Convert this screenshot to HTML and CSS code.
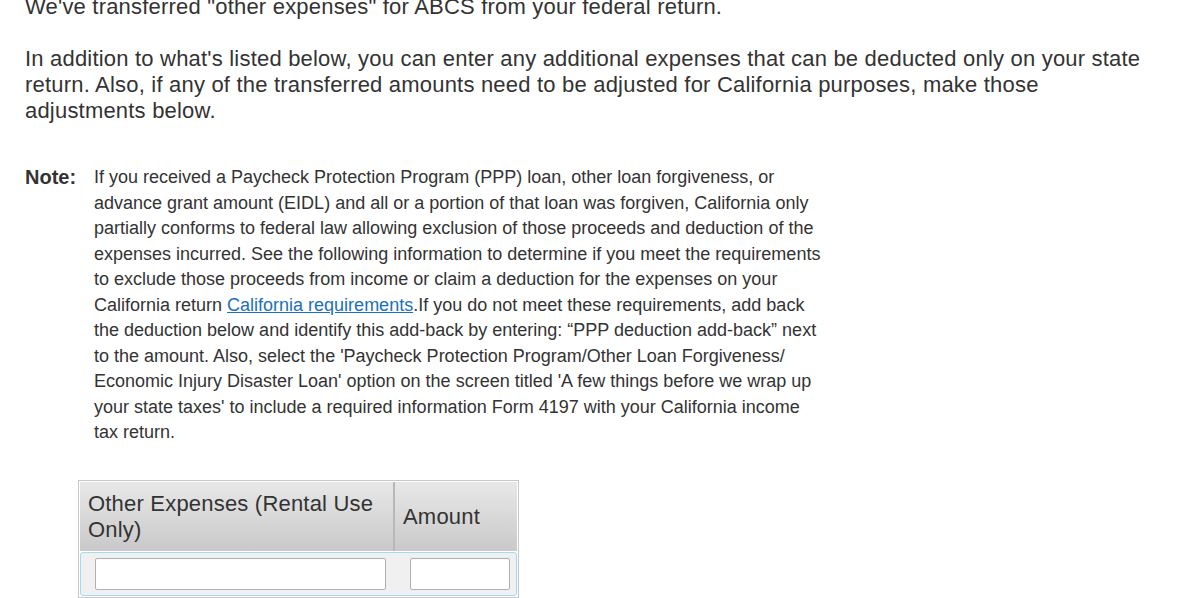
FILE: index.html
```html
<!DOCTYPE html>
<html>
<head>
<meta charset="utf-8">
<link rel="stylesheet" href="styles.css">
</head>
<body>
<div class="page">
  <p class="lead first">We've transferred "other expenses" for ABCS from your federal return.</p>
  <p class="lead">In addition to what's listed below, you can enter any additional expenses that can be deducted only on your state return. Also, if any of the transferred amounts need to be adjusted for California purposes, make those adjustments below.</p>
  <div class="note">
    <div class="note-label">Note:</div>
    <div class="note-text">If you received a Paycheck Protection Program (PPP) loan, other loan forgiveness, or advance grant amount (EIDL) and all or a portion of that loan was forgiven, California only partially conforms to federal law allowing exclusion of those proceeds and deduction of the expenses incurred. See the following information to determine if you meet the requirements to exclude those proceeds from income or claim a deduction for the expenses on your California return <a href="#" class="link">California requirements</a>.If you do not meet these requirements, add back the deduction below and identify this add-back by entering: “PPP deduction add-back” next to the amount. Also, select the 'Paycheck Protection Program/Other Loan Forgiveness/ Economic Injury Disaster Loan' option on the screen titled 'A few things before we wrap up your state taxes' to include a required information Form 4197 with your California income tax return.</div>
  </div>
  <div class="grid">
    <div class="head">
      <div class="hcell hdesc">Other Expenses (Rental Use Only)</div>
      <div class="hcell hamt">Amount</div>
    </div>
    <div class="row">
      <div class="cell cdesc"><input class="field fdesc" type="text"></div>
      <div class="cell camt"><input class="field famt" type="text"></div>
    </div>
  </div>
</div>
</body>
</html>
```

FILE: styles.css
```css
html, body {
  margin: 0;
  padding: 0;
  background: #fff;
}
.page {
  padding: 0 0 0 25px;
  font-family: "Liberation Sans", Arial, sans-serif;
  color: #333;
}
.lead {
  margin: 0 0 26px 0;
  font-size: 22px;
  line-height: 26px;
  width: 1130px;
  letter-spacing: 0.2px;
}
.lead.first {
  margin-top: -6px;
}
.note {
  display: flex;
  margin-top: 41px;
}
.note-label {
  width: 69px;
  flex: none;
  font-weight: bold;
  font-size: 20px;
  line-height: 25.5px;
}
.note-text {
  width: 728px;
  font-size: 18px;
  line-height: 25.5px;
}
.link {
  color: #1a6fc0;
  text-decoration: underline;
}
.grid {
  margin: 34px 0 0 53px;
  width: 437px;
  border: 1px solid #c8c8c8;
  padding: 1px;
}
.head {
  display: flex;
}
.hcell {
  background: linear-gradient(#e8e8e8, #c9c9c9);
  font-size: 22px;
  line-height: 26px;
  letter-spacing: 0.2px;
  color: #333;
  height: 69px;
  box-sizing: border-box;
  display: flex;
  align-items: center;
  padding: 2px 8px 0 8px;
}
.hdesc {
  width: 315px;
  border-right: 2px solid #b8b8b8;
}
.hamt {
  width: 122px;
}
.row {
  display: flex;
  margin-top: 1px;
  border: 1px solid #9fdcf5;
  border-radius: 3px;
  background: #f0f0f0;
  height: 44px;
  box-sizing: border-box;
  align-items: center;
}
.cell {
  display: flex;
  align-items: center;
}
.cdesc {
  width: 315px;
  padding-left: 14px;
  box-sizing: border-box;
}
.camt {
  padding-left: 14px;
}
.field {
  height: 32px;
  box-sizing: border-box;
  border: 1px solid #b0b0b0;
  border-radius: 2px;
  background: #fff;
  margin: 0;
  padding: 0 4px;
}
.fdesc {
  width: 291px;
}
.famt {
  width: 100px;
}
```
